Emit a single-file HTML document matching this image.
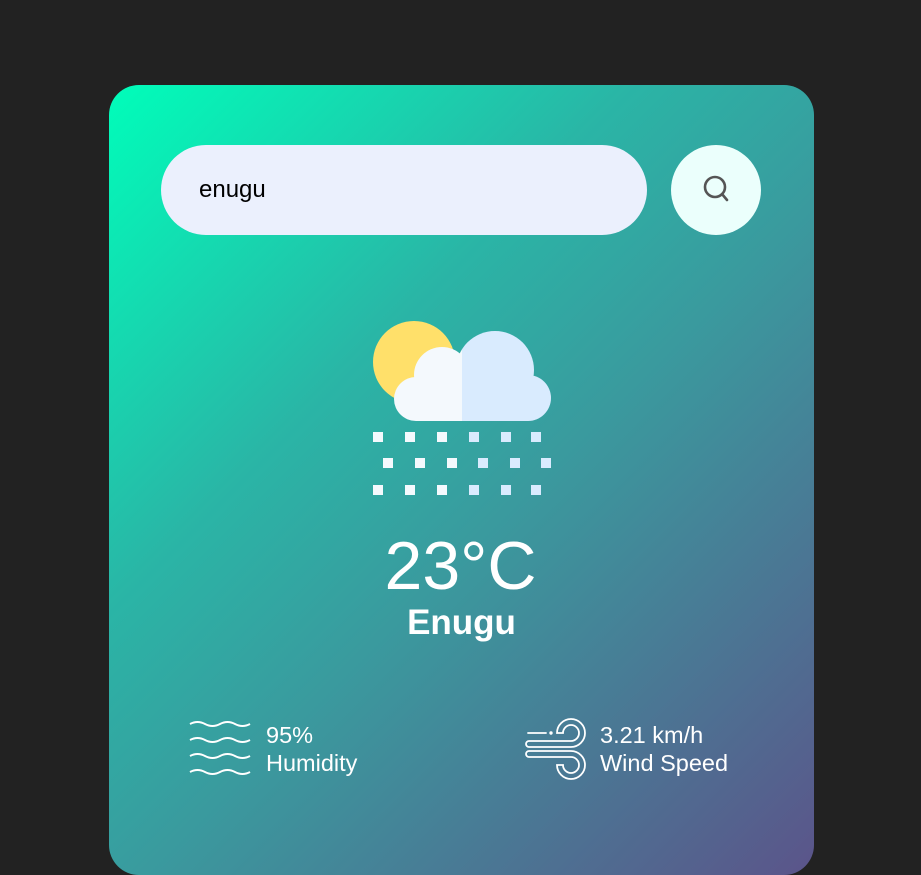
<!DOCTYPE html>
<html><head><meta charset="utf-8"><style>
body{margin:0;background:#222;width:921px;height:838px;overflow:hidden;font-family:"Liberation Sans",sans-serif;position:relative}
.card{position:absolute;left:109px;top:85px;width:705px;height:790px;border-radius:30px;background:linear-gradient(135deg,#00feba 0%,#2ab5a6 35%,#3a9a9e 55%,#5b548a 100%)}
.inp{position:absolute;left:52px;top:60px;width:486px;height:90px;border-radius:45px;background:#ebf0fd}
.inp span{position:absolute;left:38px;top:31px;font-size:24px;color:#000}
.btn{position:absolute;left:562px;top:60px;width:90px;height:90px;border-radius:50%;background:#ebfffc}
.t{position:absolute;color:#fff;text-align:center;width:705px;left:0}
.s{position:absolute;color:#fff;font-size:23.5px;line-height:28px}
</style></head><body>
<div class="card">
<div class="inp"><span>enugu</span></div>
<div class="btn"><svg width="90" height="90"><circle cx="44" cy="42" r="10" fill="none" stroke="#555" stroke-width="2.6"/><line x1="51" y1="49" x2="56" y2="55" stroke="#555" stroke-width="2.6" stroke-linecap="round"/></svg></div>
<div class="t" style="top:446px;font-size:68px;line-height:70px;padding-right:2px;box-sizing:border-box">23°C</div>
<div class="t" style="top:518px;font-size:35px;font-weight:bold;line-height:40px">Enugu</div>
<div class="s" style="left:157px;top:636px">95%<br>Humidity</div>
<div class="s" style="left:491px;top:636px">3.21 km/h<br>Wind Speed</div>
</div>
<svg style="position:absolute;left:0;top:0" width="921" height="838">
<defs>
<clipPath id="L"><rect x="0" y="0" width="462" height="838"/></clipPath>
<clipPath id="R"><rect x="462" y="0" width="200" height="838"/></clipPath>
<g id="cl"><circle cx="416" cy="399" r="22"/><circle cx="442" cy="375" r="28"/><circle cx="495" cy="370" r="39"/><circle cx="528" cy="398" r="23"/><rect x="416" y="380" width="112" height="41"/></g>
</defs>
<circle cx="414" cy="362" r="41" fill="#ffe06a"/>
<use href="#cl" fill="#f4f9fd" clip-path="url(#L)"/>
<use href="#cl" fill="#d9ebfe" clip-path="url(#R)"/>
<g fill="#f4f9fd"><rect x="373" y="432" width="10" height="10"/><rect x="405" y="432" width="10" height="10"/><rect x="437" y="432" width="10" height="10"/>
<rect x="383" y="458" width="10" height="10"/><rect x="415" y="458" width="10" height="10"/><rect x="447" y="458" width="10" height="10"/>
<rect x="373" y="485" width="10" height="10"/><rect x="405" y="485" width="10" height="10"/><rect x="437" y="485" width="10" height="10"/></g>
<g fill="#d9ebfe"><rect x="469" y="432" width="10" height="10"/><rect x="501" y="432" width="10" height="10"/><rect x="531" y="432" width="10" height="10"/>
<rect x="478" y="458" width="10" height="10"/><rect x="510" y="458" width="10" height="10"/><rect x="541" y="458" width="10" height="10"/>
<rect x="469" y="485" width="10" height="10"/><rect x="501" y="485" width="10" height="10"/><rect x="531" y="485" width="10" height="10"/></g>
<g fill="none" stroke="#fff" stroke-width="2">
<path d="M190 724 q7.5-4 15 0 t15 0 t15 0 t15 0"/><path d="M190 740 q7.5-4 15 0 t15 0 t15 0 t15 0"/><path d="M190 756 q7.5-4 15 0 t15 0 t15 0 t15 0"/><path d="M190 772 q7.5-4 15 0 t15 0 t15 0 t15 0"/>
</g>
<g fill="none" stroke="#fff" stroke-width="1.8" stroke-linecap="round">
<path d="M528 733 h18"/><circle cx="551" cy="733" r="0.8" fill="#fff"/>
<path d="M529 747 H571 A14 14 0 1 0 557 733 H563 A8 8 0 1 1 571 741 H529 A3 3 0 0 0 529 747"/>
<path d="M529 751 H571 A14 14 0 1 1 557 765 H563 A8 8 0 1 0 571 757 H529 A3 3 0 0 1 529 751"/>
</g>
</svg>
</body></html>
